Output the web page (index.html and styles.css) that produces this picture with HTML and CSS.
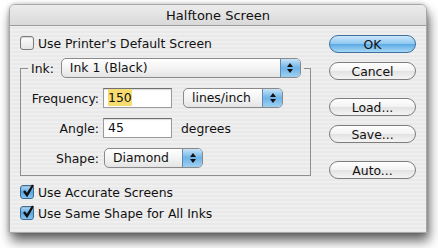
FILE: index.html
```html
<!DOCTYPE html>
<html lang="en">
<head>
  <meta charset="UTF-8" />
  <title>Halftone Screen</title>
  <link rel="stylesheet" href="styles.css">
</head>
<body>
  <div class="window">
    <div class="titlebar">Halftone Screen</div>
    <div class="content">
      <div class="main">
        <label class="check">
          <span class="box"></span>
          <span>Use Printer's Default Screen</span>
        </label>

        <fieldset class="group">
          <legend class="ink-row">
            <span class="ink-label">Ink:</span>
            <span class="popup popup-ink">
              <span class="popup-text">Ink 1 (Black)</span>
              <span class="arrows"><svg viewBox="0 0 8 12" width="8" height="12"><path d="M4 1 L7 5 L1 5 Z M4 11 L7 7 L1 7 Z"/></svg></span>
            </span>
          </legend>

          <div class="field-row">
            <span class="field-label">Frequency:</span>
            <span class="textbox"><span class="selected">150</span></span>
            <span class="popup popup-units">
              <span class="popup-text">lines/inch</span>
              <span class="arrows"><svg viewBox="0 0 8 12" width="8" height="12"><path d="M4 1 L7 5 L1 5 Z M4 11 L7 7 L1 7 Z"/></svg></span>
            </span>
          </div>

          <div class="field-row">
            <span class="field-label">Angle:</span>
            <span class="textbox">45</span>
            <span class="unit">degrees</span>
          </div>

          <div class="field-row">
            <span class="field-label">Shape:</span>
            <span class="popup popup-shape">
              <span class="popup-text">Diamond</span>
              <span class="arrows"><svg viewBox="0 0 8 12" width="8" height="12"><path d="M4 1 L7 5 L1 5 Z M4 11 L7 7 L1 7 Z"/></svg></span>
            </span>
          </div>
        </fieldset>

        <label class="check checked first-bottom">
          <span class="box"><svg viewBox="0 0 14 14" width="14" height="14"><path d="M3 7 L6 11 L12 1" /></svg></span>
          <span>Use Accurate Screens</span>
        </label>
        <label class="check checked">
          <span class="box"><svg viewBox="0 0 14 14" width="14" height="14"><path d="M3 7 L6 11 L12 1" /></svg></span>
          <span>Use Same Shape for All Inks</span>
        </label>
      </div>

      <div class="buttons">
        <button class="btn default">OK</button>
        <button class="btn">Cancel</button>
        <button class="btn spaced">Load...</button>
        <button class="btn">Save...</button>
        <button class="btn spaced">Auto...</button>
      </div>
    </div>
  </div>
</body>
</html>
```

FILE: styles.css
```css
* {
  box-sizing: border-box;
}

html, body {
  height: 248px;
}

body {
  margin: 0;
  padding: 4px 0 15px 9px;
  background: #fff;
  font-family: 'DejaVu Sans', sans-serif;
  font-size: 12.4px;
  color: #111;
  overflow: hidden;
}

.window {
  width: 418px;
  height: 229px;
  border: 1px solid #a8a8a8;
  border-radius: 6px 6px 0 0;
  background: repeating-linear-gradient(to bottom, #efefef 0, #efefef 2px, #e9e9e9 2px, #e9e9e9 4px);
  box-shadow: 2px 8px 12px rgba(0, 0, 0, 0.6), 0 0 4px rgba(0, 0, 0, 0.25);
  overflow: hidden;
}

.titlebar {
  height: 21px;
  line-height: 21px;
  text-align: center;
  font-size: 13px;
  background: linear-gradient(to bottom, #ececec, #d9d9d9);
  border-bottom: 1px solid #9c9c9c;
}

.content {
  display: flex;
  justify-content: space-between;
  padding: 0 10px 0 10px;
}

.main {
  width: 291px;
}

/* checkboxes */
.check {
  display: flex;
  align-items: center;
  gap: 4px;
  height: 14px;
  margin-top: 10px;
}

.check .box {
  width: 14px;
  height: 14px;
  border: 1px solid #7c7c7c;
  border-radius: 3px;
  background: linear-gradient(to bottom, #fdfdfd, #e6e6e6);
  box-shadow: inset 0 1px 1px rgba(0, 0, 0, 0.15);
  position: relative;
}

.check.checked .box {
  border-color: #3b6d99;
  background: linear-gradient(to bottom, #b9dcf5, #5aa6e0 50%, #86c3ee);
}

.check .box svg {
  position: absolute;
  left: 0;
  top: -2px;
  fill: none;
  stroke: #111;
  stroke-width: 2.4;
}

.check.first-bottom {
  margin-top: 9px;
}

.check + .check {
  margin-top: 7px;
}

/* group box */
.group {
  margin: 8px 0 0 0;
  padding: 0 0 7px 0;
  border: 1px solid #8e8e8e;
  min-width: 0;
}

.ink-row {
  display: flex;
  align-items: center;
  gap: 7px;
  margin-left: 7px;
  padding: 0 3px;
}

/* popups */
.popup {
  display: flex;
  height: 20px;
  border: 1px solid #8a8a8a;
  border-radius: 5px;
  background: linear-gradient(to bottom, #ffffff, #f1f1f1 60%, #e4e4e4);
  overflow: hidden;
}

.popup-text {
  flex: 1;
  padding-left: 8px;
  line-height: 18px;
}

.arrows {
  width: 20px;
  display: flex;
  align-items: center;
  justify-content: center;
  border-left: 1px solid #5d8ab3;
  background: linear-gradient(to bottom, #c6e3f8, #6eb3e8 50%, #9fd0f2);
}

.arrows svg {
  fill: #111;
}

.popup-ink {
  width: 240px;
}

.popup-units {
  width: 100px;
  margin-left: 11px;
}

.popup-shape {
  width: 99px;
  margin-left: 1px;
}

/* fields */
.field-row {
  display: flex;
  align-items: center;
  height: 20px;
  margin-top: 10px;
}

.field-label {
  width: 78px;
  text-align: right;
  margin-right: 4px;
}

.textbox {
  width: 69px;
  height: 20px;
  padding-left: 4px;
  line-height: 18px;
  border: 1px solid #9a9a9a;
  border-top-color: #6f6f6f;
  background: #fff;
  box-shadow: inset 0 1px 1px rgba(0, 0, 0, 0.15);
}

.selected {
  background: #f7dc72;
  padding: 1px 0;
}

.unit {
  margin-left: 9px;
}

/* buttons */
.buttons {
  width: 87px;
  display: flex;
  flex-direction: column;
}

.btn {
  height: 18px;
  margin-top: 9px;
  border: 1px solid #7d7d7d;
  border-radius: 10px;
  background: linear-gradient(to bottom, #ffffff, #f2f2f2 50%, #e2e2e2 51%, #f4f4f4);
  font-family: 'DejaVu Sans', sans-serif;
  font-size: 12.4px;
  color: #111;
  padding: 0;
}

.btn.default {
  border-color: #3f6f9c;
  background: linear-gradient(to bottom, #cde8fb, #8cc7f0 50%, #5ba9e3 51%, #a6d8f6);
}

.btn.spaced {
  margin-top: 18px;
}
```
